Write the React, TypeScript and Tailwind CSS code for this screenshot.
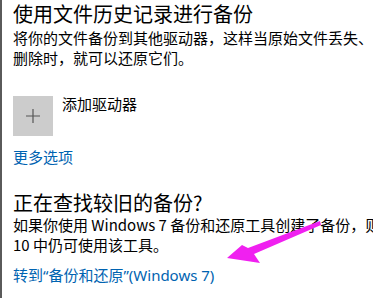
export default function App() {
  return (
    <div
      className="relative h-[298px] w-[373px] overflow-hidden border-l-2 border-[#5a5a5a] bg-white text-black"
      style={{ fontFamily: '"Microsoft YaHei", "Noto Sans CJK SC", "Noto Sans", sans-serif' }}
    >
      <div className="flex flex-col pl-[11px]">
        <h2 className="mt-[1px] whitespace-nowrap text-[20px] leading-[26px] text-[#000]">
          使用文件历史记录进行备份
        </h2>
        <p className="mt-[1px] whitespace-nowrap text-[15px] leading-[20px]">
          将你的文件备份到其他驱动器，这样当原始文件丢失、
        </p>
        <p className="whitespace-nowrap text-[15px] leading-[20px]">删除时，就可以还原它们。</p>

        <div className="mt-[28px] flex items-start gap-[9px]">
          <div className="flex h-[40px] w-[40px] items-center justify-center bg-[#cccccc]">
            <svg width="14" height="14" viewBox="0 0 14 14">
              <path d="M7 0v14M0 7h14" stroke="#555555" strokeWidth="1.2" />
            </svg>
          </div>
          <span className="mt-[-2px] text-[15px] leading-[20px]">添加驱动器</span>
        </div>

        <a className="mt-[11px] text-[15px] leading-[20px] text-[#0063b1]">更多选项</a>

        <h2 className="mt-[23px] whitespace-nowrap text-[20px] leading-[26px]">正在查找较旧的备份?</h2>
        <p className="mt-[-1px] whitespace-nowrap text-[15px] leading-[20px]">
          如果你使用 Windows 7 备份和还原工具创建了备份，则 Windows
        </p>
        <p className="whitespace-nowrap text-[15px] leading-[20px]">10 中仍可使用该工具。</p>
        <a className="mt-[10px] whitespace-nowrap text-[15px] leading-[20px] text-[#0063b1]">
          转到<span style={{ fontFamily: '"Noto Sans", sans-serif' }}>“</span>备份和还原
          <span style={{ fontFamily: '"Noto Sans", sans-serif' }}>”(Windows 7)</span>
        </a>
      </div>

      <svg className="absolute left-0 top-0" width="373" height="298" viewBox="0 0 373 298">
        <path
          d="M225 258 L240 245 L246 248 L318 221 L319 225 L252 254 L258 263 Z"
          fill="#f020f0"
        />
      </svg>
    </div>
  );
}
